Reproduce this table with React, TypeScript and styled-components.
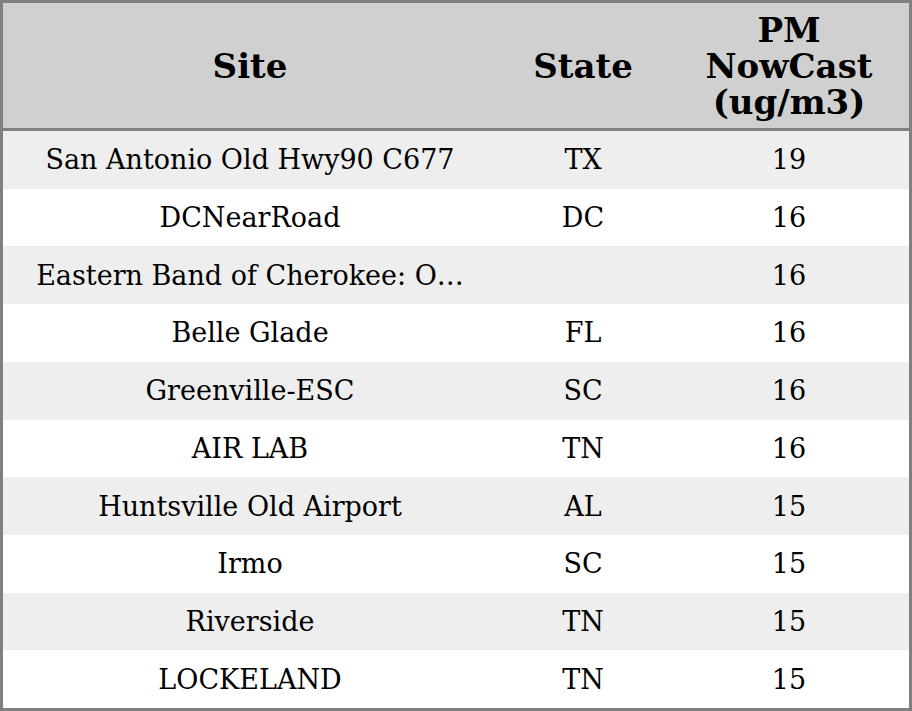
import React from "react";
import styled, { createGlobalStyle } from "styled-components";

const Global = createGlobalStyle`
  html, body { margin: 0; padding: 0; background: #ffffff; }
  body { font-family: "DejaVu Serif", serif; }
`;

const Table = styled.div`
  box-sizing: border-box;
  width: 912px;
  height: 711px;
  border: 3px solid #808080;
  display: grid;
  grid-template-columns: 494px 172px 1fr;
  grid-template-rows: 128px repeat(10, 1fr);
  font-family: "DejaVu Serif", serif;
  color: #000;
`;

const HeadCell = styled.div`
  background: #d0d0d0;
  border-bottom: 3px solid #808080;
  display: flex;
  align-items: center;
  justify-content: center;
  text-align: center;
  font-weight: bold;
  font-size: 34px;
  line-height: 36px;
`;

const Cell = styled.div<{ $alt: boolean }>`
  background: ${(p) => (p.$alt ? "#eeeeee" : "#ffffff")};
  display: flex;
  align-items: center;
  justify-content: center;
  font-size: 27px;
  padding: 0 12px;
  min-width: 0;
  white-space: nowrap;
  overflow: hidden;
  text-overflow: ellipsis;
`;

const rows: [string, string, string][] = [
  ["San Antonio Old Hwy90 C677", "TX", "19"],
  ["DCNearRoad", "DC", "16"],
  ["Eastern Band of Cherokee: O…", "", "16"],
  ["Belle Glade", "FL", "16"],
  ["Greenville-ESC", "SC", "16"],
  ["AIR LAB", "TN", "16"],
  ["Huntsville Old Airport", "AL", "15"],
  ["Irmo", "SC", "15"],
  ["Riverside", "TN", "15"],
  ["LOCKELAND", "TN", "15"],
];

export default function App() {
  return (
    <>
      <Global />
      <Table>
        <HeadCell>Site</HeadCell>
        <HeadCell>State</HeadCell>
        <HeadCell>
          PM
          <br />
          NowCast
          <br />
          (ug/m3)
        </HeadCell>
        {rows.map((r, i) => (
          <React.Fragment key={i}>
            <Cell $alt={i % 2 === 0}>{r[0]}</Cell>
            <Cell $alt={i % 2 === 0}>{r[1]}</Cell>
            <Cell $alt={i % 2 === 0}>{r[2]}</Cell>
          </React.Fragment>
        ))}
      </Table>
    </>
  );
}
